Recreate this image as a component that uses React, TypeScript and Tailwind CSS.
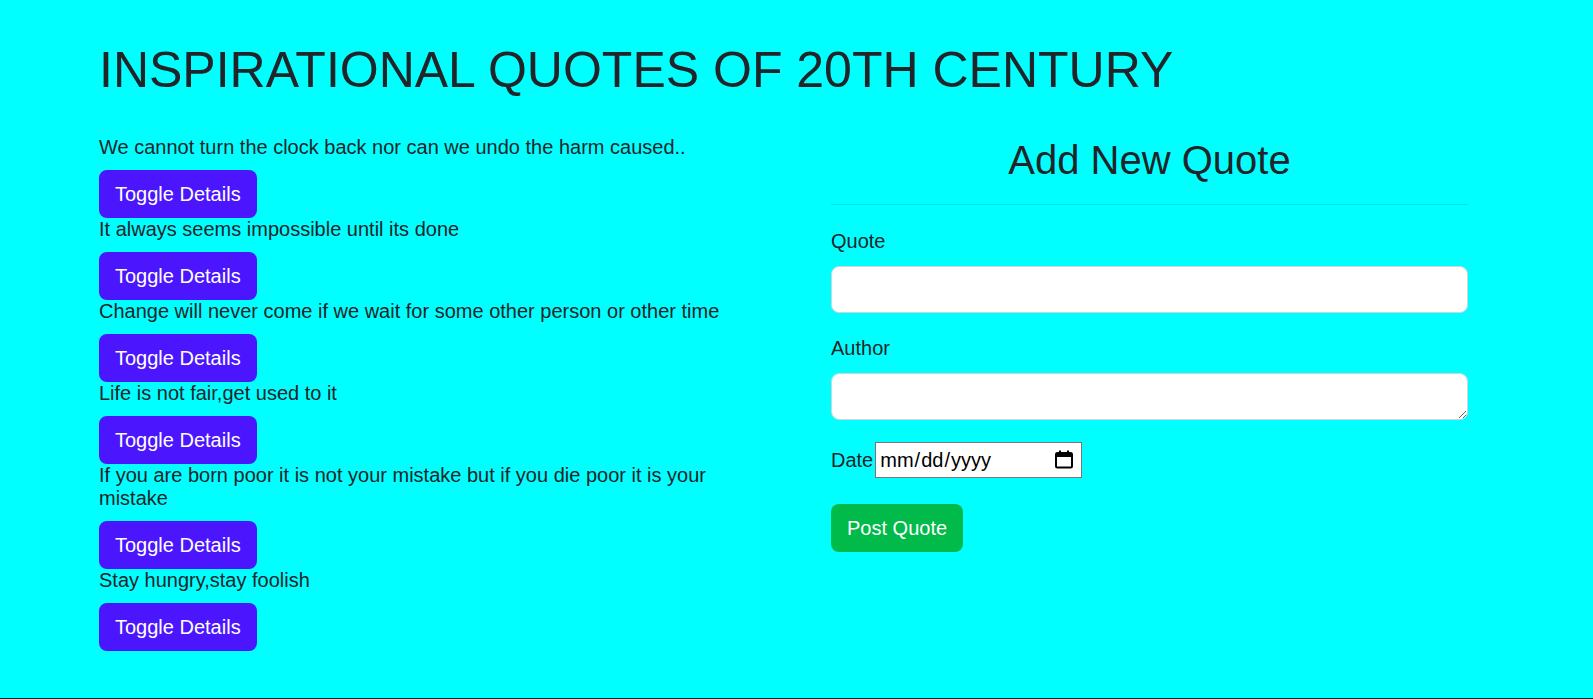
import React from "react";

const quotes: string[] = [
  "We cannot turn the clock back nor can we undo the harm caused..",
  "It always seems impossible until its done",
  "Change will never come if we wait for some other person or other time",
  "Life is not fair,get used to it",
  "If you are born poor it is not your mistake but if you die poor it is your mistake",
  "Stay hungry,stay foolish",
];

const QuoteItem: React.FC<{ text: string }> = ({ text }) => {
  return (
    <div>
      <p className="text-[20px] leading-[23px] mb-[11px]">{text}</p>
      <button className="h-[48px] px-4 rounded-lg bg-[#4b16fe] text-white text-[20px] leading-[30px]">
        Toggle Details
      </button>
    </div>
  );
};

const CalendarIcon: React.FC = () => (
  <svg width="20" height="20" viewBox="0 0 20 20" fill="none">
    <rect x="2" y="4" width="16" height="14.5" rx="1.5" stroke="#000" strokeWidth="2" />
    <rect x="2" y="4" width="16" height="4" fill="#000" />
    <rect x="5" y="1.5" width="2" height="3" fill="#000" />
    <rect x="13" y="1.5" width="2" height="3" fill="#000" />
  </svg>
);

const App: React.FC = () => {
  return (
    <div
      className="h-[658px] box-content border-b border-[#1e1e1e] bg-[#00ffff] text-[#212529] pt-[40px] pl-[99px] overflow-hidden"
      style={{ fontFamily: '"Liberation Sans", Arial, sans-serif' }}
    >
      <h1 className="text-[50px] leading-[60px] font-normal">
        INSPIRATIONAL QUOTES OF 20TH CENTURY
      </h1>
      <div className="flex mt-[36px]">
        <div className="w-[732px] pr-[90px] flex flex-col">
          {quotes.map((q) => (
            <QuoteItem key={q} text={q} />
          ))}
        </div>
        <div className="w-[637px] flex flex-col">
          <h2 className="text-[40px] leading-[48px] text-center font-normal">
            Add New Quote
          </h2>
          <div className="mt-[20px] h-px bg-[#00e3e3]" />
          <form className="flex flex-col" onSubmit={(e) => e.preventDefault()}>
            <label className="mt-[21px] text-[20px] leading-[30px] mb-[10px]">
              Quote
            </label>
            <input
              type="text"
              className="h-[47px] bg-white border border-[#ced4da] rounded-lg px-4 text-[20px] outline-none"
            />
            <label className="mt-[20px] text-[20px] leading-[30px] mb-[10px]">
              Author
            </label>
            <textarea
              rows={1}
              className="h-[47px] bg-white border border-[#ced4da] rounded-lg px-4 py-2 text-[20px] outline-none"
            />
            <div className="mt-[22px] flex items-center h-[36px]">
              <label className="text-[20px] leading-[30px]">Date</label>
              <div className="relative ml-[2px]">
                <input
                  type="date"
                  className="block w-[207px] h-[36px] bg-white border border-[#767676] pl-[3px] pr-[6px] text-[20px] text-black [&::-webkit-calendar-picker-indicator]:opacity-0"
                />
                <span className="absolute right-[8px] top-[7px] pointer-events-none">
                  <CalendarIcon />
                </span>
              </div>
            </div>
            <div className="mt-[26px]">
              <button
                type="submit"
                className="h-[48px] px-4 rounded-lg bg-[#00ba4a] text-white text-[20px] leading-[30px]"
              >
                Post Quote
              </button>
            </div>
          </form>
        </div>
      </div>
    </div>
  );
};

export default App;
